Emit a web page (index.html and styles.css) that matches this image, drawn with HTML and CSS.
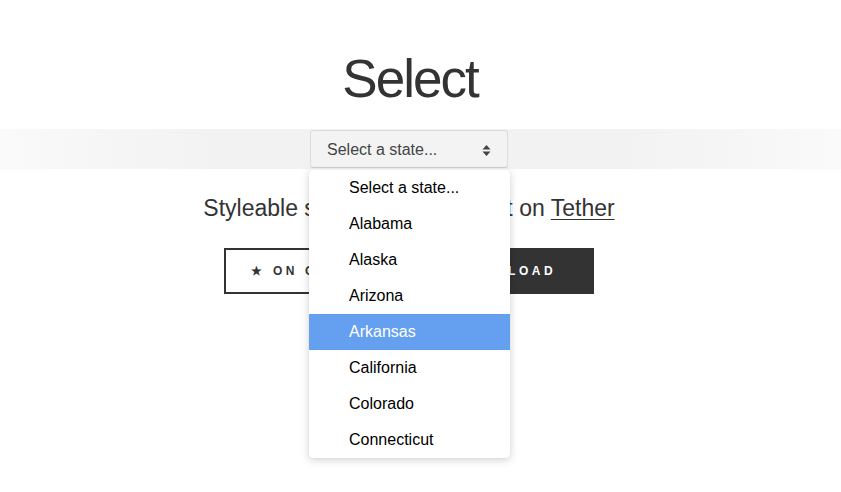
FILE: index.html
```html
<!DOCTYPE html>
<html>
<head>
<meta charset="utf-8">
<link rel="stylesheet" href="styles.css">
</head>
<body>
<main class="page">
  <header class="hero">
    <h1 class="title">Select</h1>
  </header>
  <div class="band">
    <div class="select-wrap">
      <div class="select">
        <span class="select-label">Select a state...</span>
        <svg class="select-arrow" width="9" height="13" viewBox="0 0 9 13"><path d="M4.5 1 L8.5 5.5 L0.5 5.5 Z M4.5 12 L8.5 7.5 L0.5 7.5 Z" fill="#444"/></svg>
      </div>
      <ul class="menu">
        <li class="option">Select a state...</li>
        <li class="option">Alabama</li>
        <li class="option">Alaska</li>
        <li class="option">Arizona</li>
        <li class="option is-active">Arkansas</li>
        <li class="option">California</li>
        <li class="option">Colorado</li>
        <li class="option">Connecticut</li>
      </ul>
    </div>
  </div>
  <p class="tagline">Styleable select elements built on <a class="link" href="#">Tether</a></p>
  <div class="actions">
    <a class="btn btn-outline" href="#">★ ON GITHUB</a>
    <a class="btn btn-dark" href="#">DOWNLOAD</a>
  </div>
</main>
</body>
</html>
```
FILE: styles.css
```css
html, body {
  margin: 0;
  padding: 0;
  background: #fff;
}
body {
  font-family: "Liberation Sans", Arial, sans-serif;
  color: #333;
  min-height: 492px;
}
.page {
  min-height: 492px;
}
.hero {
  display: flex;
  justify-content: center;
  padding-top: 52px;
  padding-right: 21px;
}
.title {
  margin: 0;
  font-size: 53px;
  line-height: 53px;
  font-weight: 300;
  letter-spacing: -2px;
  color: #333;
}
.band {
  margin-top: 24px;
  display: flex;
  justify-content: center;
  padding: 1px 23px 1px 0;
  background: linear-gradient(90deg, #fafafa 0%, #f2f2f2 25%, #f2f2f2 75%, #fafafa 100%);
}
.select-wrap {
  position: relative;
}
.select {
  box-sizing: border-box;
  width: 198px;
  height: 38px;
  display: flex;
  align-items: center;
  justify-content: space-between;
  padding: 2px 16px 0 16px;
  background: #f3f3f3;
  border: 1px solid #dcdcdc;
  border-bottom-color: #d0d0d0;
  border-radius: 3px;
  font-size: 16px;
  color: #444;
}
.select-label {
  line-height: 1;
}
.menu {
  position: absolute;
  top: 40px;
  left: -1px;
  width: 201px;
  margin: 0;
  padding: 0;
  list-style: none;
  background: #fff;
  border-radius: 4px;
  box-shadow: 0 2px 8px rgba(0, 0, 0, 0.18), 0 0 1px rgba(0, 0, 0, 0.12);
  z-index: 2;
  overflow: hidden;
}
.option {
  height: 36px;
  line-height: 36px;
  padding-left: 40px;
  font-size: 16px;
  color: #000;
}
.option.is-active {
  background: #64a0ef;
  color: #fff;
}
.tagline {
  margin: 24px 0 0;
  padding-right: 23px;
  text-align: center;
  font-size: 23px;
  line-height: 30px;
  color: #333;
}
.link {
  color: #333;
  text-decoration: underline;
  text-underline-offset: 3px;
  text-decoration-thickness: 1px;
}
.actions {
  display: flex;
  justify-content: center;
  gap: 18px;
  margin-top: 25px;
  padding-right: 23px;
}
.btn {
  box-sizing: border-box;
  width: 176px;
  height: 46px;
  display: flex;
  align-items: center;
  justify-content: center;
  font-size: 12px;
  font-weight: 700;
  letter-spacing: 3.6px;
  text-decoration: none;
}
.btn-outline {
  border: 2px solid #333;
  color: #333;
}
.btn-dark {
  background: #333;
  color: #fff;
}
```
